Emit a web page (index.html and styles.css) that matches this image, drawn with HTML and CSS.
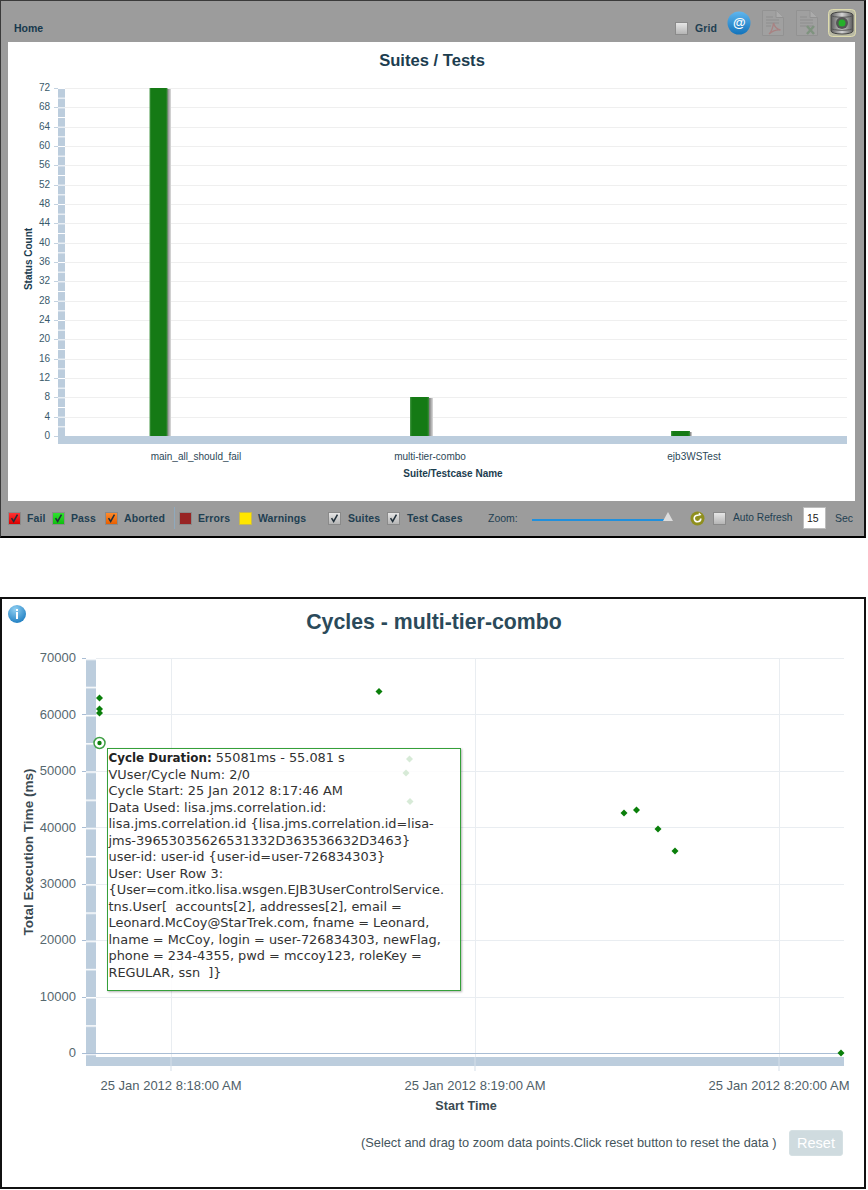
FILE: index.html
```html
<!DOCTYPE html>
<html lang="en">
<head>
<meta charset="utf-8">
<title>Suites / Tests</title>
<link rel="stylesheet" href="styles.css">
</head>
<body>
<section class="panel-top">
  <header class="topbar">
    <span class="home">Home</span>
    <div class="top-tools">
      <span class="cb cb-plain"></span><span class="lbl grid-lbl">Grid</span>
      <svg class="ico-at" width="24" height="24" viewBox="0 0 24 24"><defs><linearGradient id="atg" x1="0" y1="0" x2="0" y2="1"><stop offset="0" stop-color="#5fb6ee"/><stop offset="1" stop-color="#1273bb"/></linearGradient></defs><circle cx="12" cy="12" r="11.500" fill="url(#atg)"/><text x="12" y="16" class="at-txt">@</text></svg>
      <svg class="ico-doc" width="24" height="28" viewBox="0 0 24 28"><path d="M1.500 1.500H15L22.500 8.500V26.500H1.500Z" fill="#a0a0a0" stroke="#929292"/><path d="M15 1.500V8.500H22.500" fill="#ababab" stroke="#929292"/><path d="M5 8h7M5 11h13M5 14h13M5 17h5" stroke="#8e8e8e" fill="none"/><path d="M8 25c3-3 4-7 4.500-11 1 4 3 6 7 7-4-.5-8 1-11.500 4Z" fill="none" stroke="#a88282" stroke-width="1.300"/></svg>
      <svg class="ico-doc ico-xls" width="24" height="28" viewBox="0 0 24 28"><path d="M1.500 1.500H15L22.500 8.500V26.500H1.500Z" fill="#a0a0a0" stroke="#929292"/><path d="M15 1.500V8.500H22.500" fill="#ababab" stroke="#929292"/><path d="M5 8h7M5 11h13M5 14h13M5 17h13" stroke="#8e8e8e" fill="none"/><path d="M12 17l7 8M19 17l-7 8" stroke="#7f937f" stroke-width="2.500" fill="none"/></svg>
      <svg class="ico-db" width="28" height="28" viewBox="0 0 28 28"><defs><linearGradient id="dbg" x1="0" y1="0" x2="1" y2="0"><stop offset="0" stop-color="#5d5d5d"/><stop offset=".5" stop-color="#d4d4d4"/><stop offset="1" stop-color="#5a5a5a"/></linearGradient></defs><rect x=".5" y=".5" width="27" height="27" rx="4" fill="#b9b9a4" stroke="#dedcae"/><path d="M3 6c0-4 22-4 22 0V22c0 4-22 4-22 0Z" fill="url(#dbg)" stroke="#444"/><path d="M3 6c0 3 22 3 22 0M3 19c0 3 22 3 22 0" stroke="#555" fill="none"/><circle cx="14" cy="14" r="6" fill="#555"/><circle cx="14" cy="14" r="3.500" fill="#25b02a"/></svg>
    </div>
  </header>

  <div class="plot-a">
    <svg class="chart-a" width="847" height="459" viewBox="8 42 847 459">
      <defs>
        <pattern id="bandA" patternUnits="userSpaceOnUse" x="58" y="88" width="7" height="9.667"><rect width="7" height="9.667" fill="#bccddd"/><rect width="7" height="1" fill="#fff"/></pattern>
        <linearGradient id="barG" x1="0" y1="0" x2="1" y2="0"><stop offset="0" stop-color="#4a9a4a"/><stop offset=".1" stop-color="#157a15"/><stop offset=".9" stop-color="#157a15"/><stop offset="1" stop-color="#3f8f3f"/></linearGradient>
        <linearGradient id="barS" x1="0" y1="0" x2="1" y2="0"><stop offset="0" stop-color="#777"/><stop offset="1" stop-color="#ddd"/></linearGradient>
      </defs>
      <text x="432" y="66" class="a-title">Suites / Tests</text>
      <path class="grid-a" d="M65 88.500H847M65 107.500H847M65 127.500H847M65 146.500H847M65 165.500H847M65 185.500H847M65 204.500H847M65 223.500H847M65 243.500H847M65 262.500H847M65 281.500H847M65 301.500H847M65 320.500H847M65 339.500H847M65 359.500H847M65 378.500H847M65 397.500H847M65 417.500H847"/>
      <path class="tick-a" d="M54 88.500H58M54 107.500H58M54 127.500H58M54 146.500H58M54 165.500H58M54 185.500H58M54 204.500H58M54 223.500H58M54 243.500H58M54 262.500H58M54 281.500H58M54 301.500H58M54 320.500H58M54 339.500H58M54 359.500H58M54 378.500H58M54 397.500H58M54 417.500H58M54 436.500H58"/>
      <rect x="58" y="88" width="7" height="348" fill="url(#bandA)"/>
      <rect x="58" y="436" width="789" height="8" fill="#bccddd"/>
      <g class="a-bars">
        <rect x="167" y="89" width="4" height="347" fill="url(#barS)"/><rect x="149.500" y="88" width="18" height="348" fill="url(#barG)"/>
        <rect x="429" y="398" width="4" height="38" fill="url(#barS)"/><rect x="410" y="397" width="19" height="39" fill="url(#barG)"/>
        <rect x="690" y="432" width="2" height="4" fill="url(#barS)"/><rect x="671" y="431" width="19" height="5" fill="url(#barG)"/>
      </g>
      <g class="a-ytick">
        <text x="50" y="91">72</text><text x="50" y="110">68</text><text x="50" y="130">64</text><text x="50" y="149">60</text><text x="50" y="168">56</text><text x="50" y="188">52</text><text x="50" y="207">48</text><text x="50" y="226">44</text><text x="50" y="246">40</text><text x="50" y="265">36</text><text x="50" y="284">32</text><text x="50" y="304">28</text><text x="50" y="323">24</text><text x="50" y="342">20</text><text x="50" y="362">16</text><text x="50" y="381">12</text><text x="50" y="400">8</text><text x="50" y="420">4</text><text x="50" y="439">0</text>
      </g>
      <g class="a-xtick">
        <text x="196" y="460">main_all_should_fail</text><text x="430" y="460">multi-tier-combo</text><text x="694" y="460">ejb3WSTest</text>
      </g>
      <text x="453" y="477" class="a-axis">Suite/Testcase Name</text>
      <text transform="translate(32 259) rotate(-90)" class="a-axis">Status Count</text>
    </svg>
  </div>

  <footer class="botbar">
    <span class="cb cb-red"><svg viewBox="0 0 13 13"><path d="M3 6l2.500 4L10 2" class="tick"/></svg></span><span class="lbl w-fail">Fail</span>
    <span class="cb cb-green"><svg viewBox="0 0 13 13"><path d="M3 6l2.500 4L10 2" class="tick"/></svg></span><span class="lbl w-pass">Pass</span>
    <span class="cb cb-orange"><svg viewBox="0 0 13 13"><path d="M3 6l2.500 4L10 2" class="tick"/></svg></span><span class="lbl w-aborted">Aborted</span>
    <span class="divider"></span>
    <span class="cb cb-err"></span><span class="lbl w-errors">Errors</span>
    <span class="cb cb-warn"></span><span class="lbl w-warn">Warnings</span>
    <span class="cb cb-plain"><svg viewBox="0 0 13 13"><path d="M3 6l2.500 4L10 2" class="tick"/></svg></span><span class="lbl w-suites">Suites</span>
    <span class="cb cb-plain"><svg viewBox="0 0 13 13"><path d="M3 6l2.500 4L10 2" class="tick"/></svg></span><span class="lbl w-cases">Test Cases</span>
    <span class="lbl lbl-thin w-zoom">Zoom:</span>
    <span class="slider"><span class="thumb"></span></span>
    <svg class="ico-ref" width="15" height="15" viewBox="0 0 15 15"><circle cx="7.500" cy="7.500" r="7" fill="#8f8f1e"/><circle cx="7.500" cy="7.500" r="3.300" fill="none" stroke="#fff" stroke-width="1.600" stroke-dasharray="16 5"/><path d="M9 1.500l2.500 2.500-3.500 1z" fill="#fff"/></svg>
    <span class="cb cb-plain"></span><span class="lbl lbl-thin w-auto">Auto Refresh</span>
    <span class="num">15</span><span class="lbl lbl-thin">Sec</span>
  </footer>
</section>

<section class="panel-bot">
  <div class="plot-b">
    <svg class="chart-b" width="862" height="524" viewBox="2 598 862 524">
      <defs>
        <radialGradient id="inf" cx=".4" cy=".25" r=".8"><stop offset="0" stop-color="#8fcff2"/><stop offset="1" stop-color="#1c7cc0"/></radialGradient>
        <pattern id="bandB" patternUnits="userSpaceOnUse" x="86" y="657.500" width="10" height="28.210"><rect width="10" height="28.210" fill="#bccddd"/><rect width="10" height="1.500" fill="#fff"/></pattern>
      </defs>
      <circle cx="17" cy="613" r="9" fill="url(#inf)"/><rect x="16" y="611" width="2" height="7" fill="#fff"/><rect x="16" y="608" width="2" height="2" fill="#fff"/>
      <text x="434" y="628" class="b-title">Cycles - multi-tier-combo</text>
      <path class="grid-b" d="M96 657.500H844M96 713.500H844M96 770.500H844M96 826.500H844M96 883.500H844M96 939.500H844M96 996.500H844M171.500 658V1056M475.500 658V1056M779.500 658V1056"/>
      <rect x="86" y="658" width="10" height="398" fill="url(#bandB)"/>
      <rect x="86" y="1056" width="758" height="9" fill="#bccddd"/>
      <path class="base-b" d="M96 1052.500H844M82 657.500H86M82 713.500H86M82 770.500H86M82 826.500H86M82 883.500H86M82 939.500H86M82 996.500H86M82 1052.500H96"/>
      <path class="xtick-b" d="M171 1056V1070M475 1056V1070M779 1056V1070"/>
      <g class="b-ytick">
        <text x="76" y="661">70000</text><text x="76" y="718">60000</text><text x="76" y="774">50000</text><text x="76" y="831">40000</text><text x="76" y="887">30000</text><text x="76" y="943">20000</text><text x="76" y="1000">10000</text><text x="76" y="1056">0</text>
      </g>
      <g class="b-xtick">
        <text x="171" y="1089">25 Jan 2012 8:18:00 AM</text><text x="475" y="1089">25 Jan 2012 8:19:00 AM</text><text x="779" y="1089">25 Jan 2012 8:20:00 AM</text>
      </g>
      <text x="466" y="1109" class="b-axis">Start Time</text>
      <text transform="translate(33 851) rotate(-90)" class="b-axis-v">Total Execution Time (ms)</text>
      <g class="pts">
        <path d="M99.500 693.500l3.500 3.500-3.500 3.500-3.500-3.500z"/><path d="M99.500 704.500l3.500 3.500-3.500 3.500-3.500-3.500z"/><path d="M99.500 708.500l3.500 3.500-3.500 3.500-3.500-3.500z"/><path d="M379 687l3.500 3.500-3.500 3.500-3.500-3.500z"/><path d="M409.500 754.500l3.500 3.500-3.500 3.500-3.500-3.500z"/><path d="M406 768.500l3.500 3.500-3.500 3.500-3.500-3.500z"/><path d="M410 797l3.500 3.500-3.500 3.500-3.500-3.500z"/><path d="M624 808.500l3.500 3.500-3.500 3.500-3.500-3.500z"/><path d="M636.500 805.500l3.500 3.500-3.500 3.500-3.500-3.500z"/><path d="M658 824.500l3.500 3.500-3.500 3.500-3.500-3.500z"/><path d="M675 846.500l3.500 3.500-3.500 3.500-3.500-3.500z"/><path d="M841 1048.500l3.500 3.500-3.500 3.500-3.500-3.500z"/>
      </g>
      <circle cx="99.500" cy="742" r="5.500" fill="#fff" stroke="#3f9f45" stroke-width="1.500"/><circle cx="99.500" cy="742" r="2.200" fill="#0a7f0a"/>
    </svg>
    <div class="tip"><b>Cycle Duration:</b> 55081ms - 55.081 s<br>VUser/Cycle Num: 2/0<br>Cycle Start: 25 Jan 2012 8:17:46 AM<br>Data Used: lisa.jms.correlation.id:<br>lisa.jms.correlation.id {lisa.jms.correlation.id=lisa-<br>jms-39653035626531332D363536632D3463}<br>user-id: user-id {user-id=user-726834303}<br>User: User Row 3:<br>{User=com.itko.lisa.wsgen.EJB3UserControlService.<br>tns.User[&nbsp; accounts[2], addresses[2], email =<br>Leonard.McCoy@StarTrek.com, fname = Leonard,<br>lname = McCoy, login = user-726834303, newFlag,<br>phone = 234-4355, pwd = mccoy123, roleKey =<br>REGULAR, ssn &nbsp;]}</div>
  </div>
  <div class="note-row">
    <span class="note">(Select and drag to zoom data points.Click reset button to reset the data )</span>
    <button class="reset" type="button">Reset</button>
  </div>
</section>
</body>
</html>
```

FILE: styles.css
```css
html, body { margin: 0; padding: 0; background: #fff; }
body { width: 868px; height: 1190px; overflow: hidden; font-family: "Liberation Sans", Arial, sans-serif; color: #1f3f52; }
svg { display: block; }

.panel-top { width: 866px; height: 538px; box-sizing: border-box; background: #9c9c9c; border: 1px solid #3a3a3a; border-bottom: 2px solid #000; border-right: 2px solid #111; display: flex; flex-direction: column; padding: 0 8px 0 7px; }
.topbar { height: 41px; display: flex; align-items: flex-start; justify-content: space-between; position: relative; flex: none; }
.home { margin: 21px 0 0 6px; font-size: 10.500px; font-weight: 700; color: #17384c; }
.top-tools { display: flex; align-items: flex-start; padding-top: 8px; }
.top-tools .cb { margin-top: 13px; margin-left: 1px; }
.grid-lbl { margin: 13px 0 0 7px; width: 32px; line-height: 13px; letter-spacing: 0; }
.ico-at { margin: 2px 0 0 0; }
.ico-doc { margin: 0 0 0 10px; }
.ico-xls { margin-left: 10px; }
.ico-db { margin-left: 9px; }

.plot-a { flex: none; width: 847px; height: 459px; background: #fff; }
.a-title { font: 700 16.600px "Liberation Sans", Arial, sans-serif; fill: #1c3d4f; text-anchor: middle; }
.grid-a { stroke: #efefef; stroke-width: 1; fill: none; }
.tick-a { stroke: #c3d2e0; stroke-width: 1; fill: none; }
.a-ytick text { font: 10px "Liberation Sans", Arial, sans-serif; fill: #3a5a6b; text-anchor: end; }
.a-xtick text { font: 10px "Liberation Sans", Arial, sans-serif; fill: #2c4858; text-anchor: middle; }
.a-axis { font: 700 10px "Liberation Sans", Arial, sans-serif; fill: #1c3d4f; text-anchor: middle; }
.at-txt { font: italic 700 13px "Liberation Sans", Arial, sans-serif; fill: #fff; text-anchor: middle; }

.botbar { flex: 1; display: flex; align-items: center; margin-bottom: 1px; }
.cb { flex: none; width: 13px; height: 13px; box-sizing: border-box; border: 1px solid #8a8a8a; display: block; }
.cb svg { width: 11px; height: 11px; }
.cb-plain { background: linear-gradient(#e6e6e6, #b5b5b5); }
.cb-red { background: linear-gradient(#f33, #d00); }
.cb-green { background: linear-gradient(#2fe02f, #0fbf0f); }
.cb-orange { background: linear-gradient(#ff8a2a, #e85f00); }
.cb-err { background: #982424; }
.cb-warn { background: #ffe600; border-color: #c9b94a; }
.tick { fill: none; stroke: #22303a; stroke-width: 1.800; }
.lbl { font-size: 10.500px; font-weight: 700; letter-spacing: .1px; color: #1f3f52; white-space: nowrap; margin-bottom: 1px; }
.lbl-thin { font-weight: 400; letter-spacing: 0; }
.w-fail { width: 25px; margin-left: 6px; }
.w-pass { width: 34px; margin-left: 6px; }
.w-aborted { width: 50px; margin-left: 6px; }
.w-errors { width: 41px; margin-left: 6px; }
.w-warn { width: 70px; margin-left: 6px; }
.w-suites { width: 39px; margin-left: 7px; }
.w-cases { width: 81px; margin-left: 7px; }
.w-zoom { width: 43px; }
.w-auto { width: 70px; margin-left: 7px; font-size: 10.200px; }
.divider { flex: none; width: 1px; height: 22px; background: #8fa9bd; margin: 0 4px 0 0; }
.slider { flex: none; width: 138px; height: 2px; margin-top: 4px; margin-left: 1px; background: #2090dd; position: relative; }
.thumb { position: absolute; right: -3px; top: -7px; width: 0; height: 0; border-left: 5px solid transparent; border-right: 5px solid transparent; border-bottom: 9px solid #dcdcdc; }
.ico-ref { margin-left: 20px; margin-right: 8px; }
.num { flex: none; width: 23px; height: 22px; box-sizing: border-box; margin-right: 9px; background: #fff; border: 1px solid #bdbdbd; color: #222; font-size: 10.500px; line-height: 20px; padding-left: 3px; }

.panel-bot { width: 866px; height: 592px; margin-top: 59px; box-sizing: border-box; border: 2px solid #111; background: #fff; display: flex; flex-direction: column; }
.plot-b { position: relative; flex: none; width: 862px; height: 524px; }
.b-title { font: 700 21.300px "Liberation Sans", Arial, sans-serif; fill: #2b4a5a; text-anchor: middle; }
.grid-b { stroke: #e9edf1; stroke-width: 1; fill: none; }
.base-b { stroke: #a9bdd4; stroke-width: 1; fill: none; }
.xtick-b { stroke: #d5dfe9; stroke-width: 1; fill: none; }
.b-ytick text { font: 13px "Liberation Sans", Arial, sans-serif; fill: #56686f; text-anchor: end; }
.b-xtick text { font: 13px "Liberation Sans", Arial, sans-serif; fill: #4f6068; text-anchor: middle; }
.b-axis { font: 700 12.600px "Liberation Sans", Arial, sans-serif; fill: #3b4a52; text-anchor: middle; }
.b-axis-v { font: 700 13.500px "Liberation Sans", Arial, sans-serif; fill: #3b4a52; text-anchor: middle; }
.pts path { fill: #0a7f0a; }

.tip { position: absolute; left: 104.500px; top: 149px; width: 354px; height: 243px; box-sizing: border-box; padding: 1px 0 0 1px; background: rgba(255,255,255,.84); border: 1.500px solid #35a03a; box-shadow: 1px 1px 2px rgba(0,0,0,.3); font: 12.900px/16.500px "DejaVu Sans", Verdana, sans-serif; color: #333; white-space: nowrap; }
.tip b { color: #222; font-size: 11.900px; }

.note-row { flex: none; display: flex; align-items: center; padding: 7px 0 0 359px; }
.note { font-size: 12.800px; color: #44555c; width: 428px; white-space: nowrap; margin-bottom: 2px; }
.reset { width: 54px; height: 26px; padding: 0; border: 1px solid #d5e0e3; border-radius: 3px; background: #cfdbdf; color: #fff; font: 400 14.500px "Liberation Sans", Arial, sans-serif; }
```
